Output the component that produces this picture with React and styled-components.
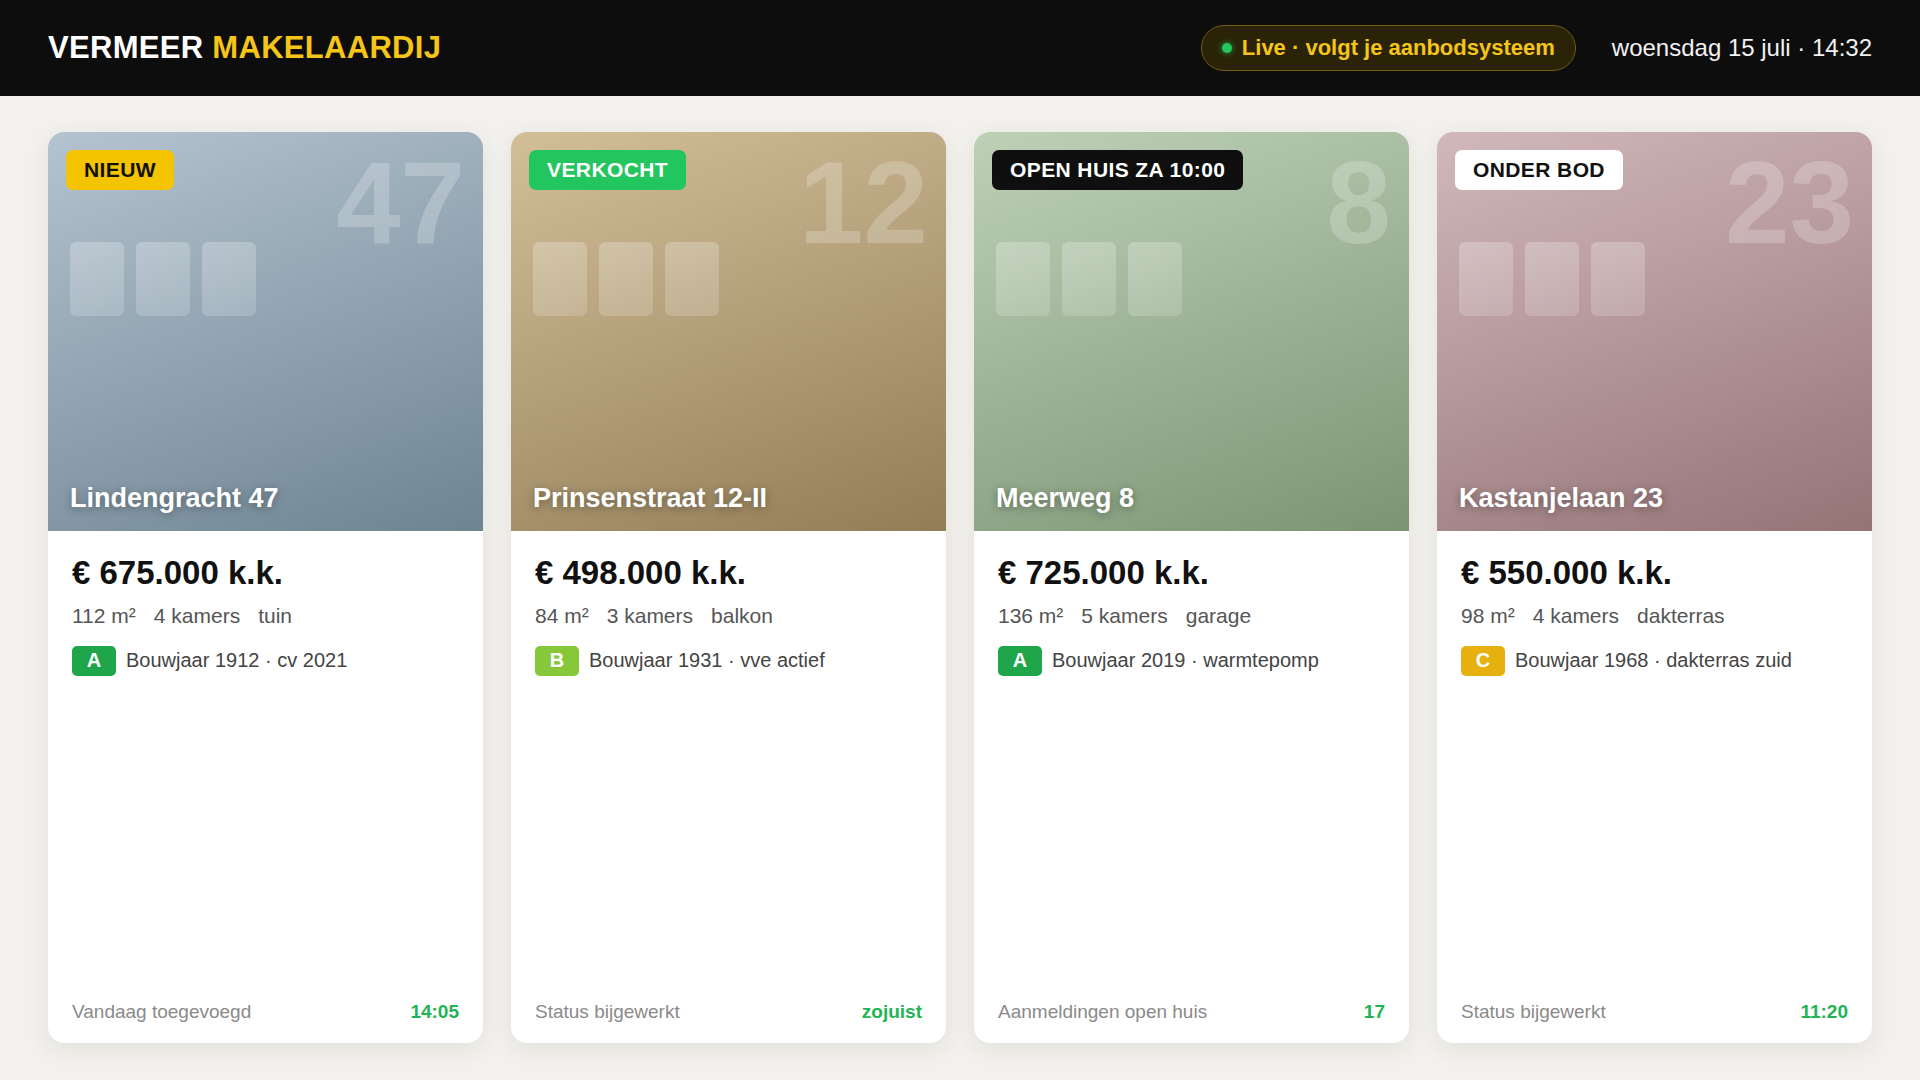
import React from 'react';
import styled, { createGlobalStyle } from 'styled-components';

// listing data
const listings = [
  {
    id: 1,
    badge: 'NIEUW',
    badgeKind: 'new',
    number: '47',
    title: 'Lindengracht 47',
    from: '#b4c3cf',
    to: '#6e8492',
    price: '€ 675.000 k.k.',
    specs: ['112 m²', '4 kamers', 'tuin'],
    label: 'A',
    meta: 'Bouwjaar 1912 · cv 2021',
    footer: 'Vandaag toegevoegd',
    value: '14:05',
  },
  {
    id: 2,
    badge: 'VERKOCHT',
    badgeKind: 'sold',
    number: '12',
    title: 'Prinsenstraat 12-II',
    from: '#d2bf9a',
    to: '#927d57',
    price: '€ 498.000 k.k.',
    specs: ['84 m²', '3 kamers', 'balkon'],
    label: 'B',
    meta: 'Bouwjaar 1931 · vve actief',
    footer: 'Status bijgewerkt',
    value: 'zojuist',
  },
  {
    id: 3,
    badge: 'OPEN HUIS ZA 10:00',
    badgeKind: 'open',
    number: '8',
    title: 'Meerweg 8',
    from: '#bed1b7',
    to: '#7c9474',
    price: '€ 725.000 k.k.',
    specs: ['136 m²', '5 kamers', 'garage'],
    label: 'A',
    meta: 'Bouwjaar 2019 · warmtepomp',
    footer: 'Aanmeldingen open huis',
    value: '17',
  },
  {
    id: 4,
    badge: 'ONDER BOD',
    badgeKind: 'bid',
    number: '23',
    title: 'Kastanjelaan 23',
    from: '#d1b8bb',
    to: '#957476',
    price: '€ 550.000 k.k.',
    specs: ['98 m²', '4 kamers', 'dakterras'],
    label: 'C',
    meta: 'Bouwjaar 1968 · dakterras zuid',
    footer: 'Status bijgewerkt',
    value: '11:20',
  },
];

const badgeColors = {
  new: { bg: '#f5c400', fg: '#111111' },
  sold: { bg: '#22c55e', fg: '#ffffff' },
  open: { bg: '#0f0f0f', fg: '#ffffff' },
  bid: { bg: '#ffffff', fg: '#111111' },
};

const labelColors = {
  A: '#1fa64a',
  B: '#86c83a',
  C: '#e6b10e',
};

// Dashboard Component
const App = () => {
  return (
    <>
      <GlobalStyle />
      <Page>
        <TopBar>
          <Brand>
            VERMEER <span>MAKELAARDIJ</span>
          </Brand>
          <TopRight>
            <LivePill>
              <LiveDot />
              Live · volgt je aanbodsysteem
            </LivePill>
            <Clock>woensdag 15 juli · 14:32</Clock>
          </TopRight>
        </TopBar>
        <Grid>
          {listings.map((item) => (
            <Card key={item.id}>
              <Photo $from={item.from} $to={item.to}>
                <HouseNumber>{item.number}</HouseNumber>
                <Badge $kind={item.badgeKind}>{item.badge}</Badge>
                <Windows>
                  <Window />
                  <Window />
                  <Window />
                </Windows>
                <Address>{item.title}</Address>
              </Photo>
              <Body>
                <Price>{item.price}</Price>
                <Specs>
                  {item.specs.map((s) => (
                    <span key={s}>{s}</span>
                  ))}
                </Specs>
                <MetaRow>
                  <EnergyLabel $grade={item.label}>{item.label}</EnergyLabel>
                  {item.meta}
                </MetaRow>
                <Footer>
                  <FooterText>{item.footer}</FooterText>
                  <FooterValue>{item.value}</FooterValue>
                </Footer>
              </Body>
            </Card>
          ))}
        </Grid>
      </Page>
    </>
  );
};

const GlobalStyle = createGlobalStyle`
  html, body {
    margin: 0;
    padding: 0;
    background: #f3f1ed;
    font-family: "Liberation Sans", Arial, sans-serif;
  }
  * {
    box-sizing: border-box;
  }
`;

const Page = styled.div`
  width: 1920px;
  height: 1080px;
  display: flex;
  flex-direction: column;
  background: #f3f1ed;
  overflow: hidden;
`;

const TopBar = styled.header`
  height: 96px;
  flex-shrink: 0;
  background: #0d0d0d;
  display: flex;
  align-items: center;
  justify-content: space-between;
  padding: 0 48px;
`;

const Brand = styled.div`
  color: #ffffff;
  font-size: 31px;
  font-weight: 700;
  letter-spacing: 0.3px;

  span {
    color: #f5c518;
  }
`;

const TopRight = styled.div`
  display: flex;
  align-items: center;
  gap: 36px;
`;

const LivePill = styled.div`
  height: 46px;
  display: flex;
  align-items: center;
  gap: 10px;
  padding: 0 20px;
  border-radius: 23px;
  border: 1px solid #6e5c12;
  background: #2a2307;
  color: #f5c518;
  font-size: 22px;
  font-weight: 700;
`;

const LiveDot = styled.span`
  width: 10px;
  height: 10px;
  border-radius: 50%;
  background: #22c55e;
  box-shadow: 0 0 6px rgba(34, 197, 94, 0.8);
`;

const Clock = styled.div`
  color: #f2f2f2;
  font-size: 24px;
`;

const Grid = styled.main`
  flex: 1;
  display: grid;
  grid-template-columns: repeat(4, 1fr);
  gap: 28px;
  padding: 36px 48px 37px;
  min-height: 0;
`;

const Card = styled.article`
  background: #ffffff;
  border-radius: 16px;
  overflow: hidden;
  display: flex;
  flex-direction: column;
  box-shadow: 0 6px 22px rgba(60, 50, 30, 0.09);
`;

const Photo = styled.div`
  position: relative;
  height: 399px;
  flex-shrink: 0;
  display: flex;
  flex-direction: column;
  align-items: flex-start;
  padding: 18px 22px 17px 18px;
  background: linear-gradient(160deg, ${({ $from }) => $from} 0%, ${({ $to }) => $to} 100%);
`;

const HouseNumber = styled.div`
  position: absolute;
  top: 13px;
  right: 18px;
  font-size: 116px;
  font-weight: 700;
  line-height: 1;
  color: rgba(255, 255, 255, 0.22);
`;

const Badge = styled.div`
  position: relative;
  height: 40px;
  display: flex;
  align-items: center;
  padding: 0 18px;
  border-radius: 7px;
  font-size: 21px;
  font-weight: 700;
  letter-spacing: 0.4px;
  background: ${({ $kind }) => badgeColors[$kind].bg};
  color: ${({ $kind }) => badgeColors[$kind].fg};
`;

const Windows = styled.div`
  display: flex;
  gap: 12px;
  margin: 52px 0 0 4px;
`;

const Window = styled.div`
  width: 54px;
  height: 74px;
  border-radius: 6px;
  background: linear-gradient(160deg, rgba(255, 255, 255, 0.26), rgba(255, 255, 255, 0.16));
`;

const Address = styled.div`
  margin-top: auto;
  padding-left: 4px;
  color: #ffffff;
  font-size: 27px;
  font-weight: 700;
  text-shadow: 0 2px 8px rgba(0, 0, 0, 0.35);
`;

const Body = styled.div`
  flex: 1;
  display: flex;
  flex-direction: column;
  padding: 22px 24px 20px;
`;

const Price = styled.div`
  font-size: 33px;
  font-weight: 700;
  color: #111111;
  line-height: 1.2;
`;

const Specs = styled.div`
  display: flex;
  gap: 18px;
  margin-top: 11px;
  font-size: 21px;
  color: #555555;
`;

const MetaRow = styled.div`
  display: flex;
  align-items: center;
  gap: 10px;
  margin-top: 18px;
  font-size: 20px;
  color: #444444;
`;

const EnergyLabel = styled.span`
  width: 44px;
  height: 30px;
  border-radius: 5px;
  display: flex;
  align-items: center;
  justify-content: center;
  background: ${({ $grade }) => labelColors[$grade]};
  color: #ffffff;
  font-size: 20px;
  font-weight: 700;
`;

const Footer = styled.div`
  margin-top: auto;
  display: flex;
  align-items: center;
  justify-content: space-between;
`;

const FooterText = styled.span`
  font-size: 19px;
  color: #8a8a8a;
`;

const FooterValue = styled.span`
  font-size: 19px;
  font-weight: 700;
  color: #22b455;
`;

export default App;
